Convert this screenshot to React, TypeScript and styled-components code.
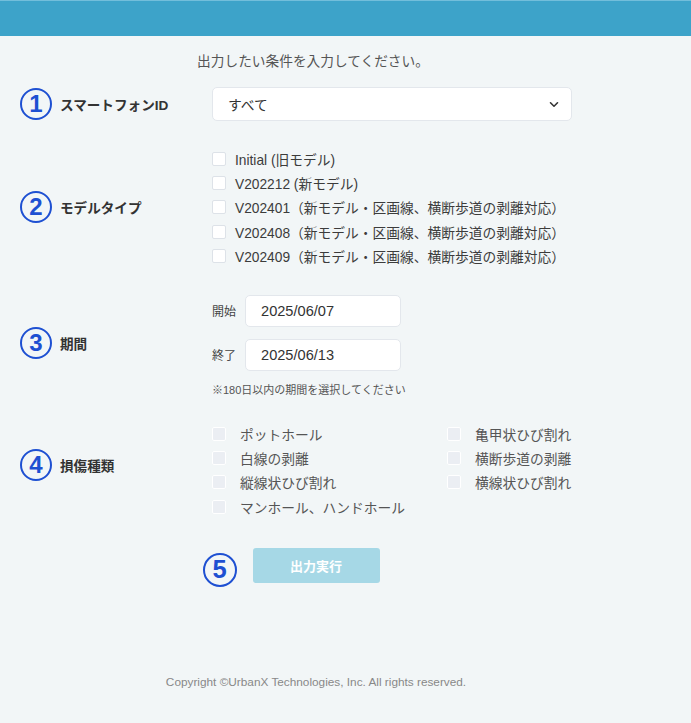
import React from "react";
import styled, { createGlobalStyle } from "styled-components";

const Global = createGlobalStyle`
  html, body { margin: 0; padding: 0; background: #f2f6f7; }
  body {
    font-family: "Liberation Sans", "Noto Sans CJK JP", sans-serif;
    color: #333;
  }
`;

const Page = styled.div`
  min-height: 723px;
  background: #f2f6f7;
  display: flex;
  flex-direction: column;
`;

const Header = styled.header`
  height: 36px;
  box-sizing: border-box;
  background: #3da3c9;
  border-top: 1px solid #72bedb;
`;

const Main = styled.main`
  width: 632px;
  padding-top: 16px;
  display: flex;
  flex-direction: column;
`;

const Intro = styled.p`
  margin: 0 0 15px;
  padding-right: 6px;
  text-align: center;
  font-size: 13.7px;
  line-height: 20px;
  color: #555;
`;

const Row = styled.section<{ $mt: number }>`
  display: grid;
  grid-template-columns: 192px 1fr;
  align-items: center;
  padding-left: 20px;
  margin-top: ${(p) => p.$mt}px;
`;

const LabelCell = styled.div<{ $shift?: number }>`
  display: flex;
  align-items: center;
  gap: 8px;
  margin-bottom: ${(p) => p.$shift ?? 0}px;
`;

const Badge = styled.span<{ $size?: number }>`
  width: ${(p) => p.$size ?? 32}px;
  height: ${(p) => p.$size ?? 32}px;
  box-sizing: border-box;
  border: 2px solid #1e50d2;
  border-radius: 50%;
  display: flex;
  align-items: center;
  justify-content: center;
  color: #1e50d2;
  font-family: "Liberation Sans", Arial, sans-serif;
  font-size: ${(p) => ((p.$size ?? 32) * 0.75).toFixed(1)}px;
  font-weight: 700;
  line-height: 1;
  flex: none;
`;

const LabelText = styled.span`
  font-size: 13.6px;
  font-weight: 700;
  color: #333;
`;

const SelectBox = styled.div`
  width: 360px;
  height: 34px;
  box-sizing: border-box;
  background: #fff;
  border: 1px solid #e3e7ec;
  border-radius: 5px;
  display: flex;
  align-items: center;
  justify-content: space-between;
  padding: 0 12px 0 15px;
  font-size: 13.75px;
  color: #333;
`;

const CheckList = styled.div`
  display: flex;
  flex-direction: column;
`;

const CheckItem = styled.label<{ $gap: number; $muted?: boolean }>`
  height: 24.2px;
  display: flex;
  align-items: center;
  gap: ${(p) => p.$gap}px;
  font-size: 13.75px;
  color: ${(p) => (p.$muted ? "#555" : "#3c3c3c")};
  white-space: nowrap;
`;

const Box = styled.span<{ $disabled?: boolean }>`
  width: 14px;
  height: 14px;
  box-sizing: border-box;
  border-radius: 2px;
  flex: none;
  background: ${(p) => (p.$disabled ? "#ebeef3" : "#fff")};
  border: 1px solid ${(p) => (p.$disabled ? "#fff" : "#dde2e8")};
`;

const DateGroup = styled.div`
  display: flex;
  flex-direction: column;
  gap: 12px;
`;

const DateRow = styled.div`
  display: flex;
  align-items: center;
  gap: 9px;
  font-size: 12px;
  color: #444;
`;

const DateInput = styled.div`
  width: 156px;
  height: 32px;
  box-sizing: border-box;
  background: #fff;
  border: 1px solid #e3e7ec;
  border-radius: 5px;
  display: flex;
  align-items: center;
  padding-left: 15px;
  font-size: 14.6px;
  color: #333;
`;

const Note = styled.p`
  margin: 12px 0 0;
  font-size: 11px;
  line-height: 14px;
  color: #555;
`;

const DamageGrid = styled.div`
  display: grid;
  grid-template-columns: 235px auto;
  grid-template-rows: repeat(4, 24.2px);
  grid-auto-flow: column;
`;

const ActionRow = styled.div`
  display: grid;
  grid-template-columns: 1fr auto 1fr;
  align-items: start;
  margin-top: 29px;
`;

const BadgeSlot = styled.div`
  display: flex;
  justify-content: flex-end;
  padding: 5px 16px 0 0;
`;

const RunButton = styled.button`
  width: 127px;
  height: 35px;
  border: none;
  border-radius: 3px;
  background: #a6d8e6;
  color: #fff;
  font-family: "Liberation Sans", "Noto Sans CJK JP", sans-serif;
  font-size: 13px;
  font-weight: 700;
  padding: 0;
`;

const Footer = styled.footer`
  width: 632px;
  margin-top: 87px;
  text-align: center;
  font-size: 11.8px;
  line-height: 16px;
  color: #888;
`;

const Chevron = () => (
  <svg width="10" height="7" viewBox="0 0 10 7" fill="none">
    <path d="M1.5 1.8l3.5 3.4 3.5-3.4" stroke="#333" strokeWidth="1.6" strokeLinecap="round" strokeLinejoin="round" />
  </svg>
);

const models = [
  "Initial (旧モデル)",
  "V202212 (新モデル)",
  "V202401（新モデル・区画線、横断歩道の剥離対応）",
  "V202408（新モデル・区画線、横断歩道の剥離対応）",
  "V202409（新モデル・区画線、横断歩道の剥離対応）",
];

const damages = [
  "ポットホール",
  "白線の剥離",
  "縦線状ひび割れ",
  "マンホール、ハンドホール",
  "亀甲状ひび割れ",
  "横断歩道の剥離",
  "横線状ひび割れ",
];

export default function App() {
  return (
    <Page>
      <Global />
      <Header />
      <Main>
        <Intro>出力したい条件を入力してください。</Intro>

        <Row $mt={0}>
          <LabelCell>
            <Badge>1</Badge>
            <LabelText>スマートフォンID</LabelText>
          </LabelCell>
          <SelectBox>
            <span>すべて</span>
            <Chevron />
          </SelectBox>
        </Row>

        <Row $mt={26}>
          <LabelCell>
            <Badge>2</Badge>
            <LabelText>モデルタイプ</LabelText>
          </LabelCell>
          <CheckList>
            {models.map((m) => (
              <CheckItem key={m} $gap={9}>
                <Box />
                {m}
              </CheckItem>
            ))}
          </CheckList>
        </Row>

        <Row $mt={27}>
          <LabelCell $shift={5}>
            <Badge>3</Badge>
            <LabelText>期間</LabelText>
          </LabelCell>
          <div>
            <DateGroup>
              <DateRow>
                開始<DateInput>2025/06/07</DateInput>
              </DateRow>
              <DateRow>
                終了<DateInput>2025/06/13</DateInput>
              </DateRow>
            </DateGroup>
            <Note>※180日以内の期間を選択してください</Note>
          </div>
        </Row>

        <Row $mt={25}>
          <LabelCell $shift={10}>
            <Badge>4</Badge>
            <LabelText>損傷種類</LabelText>
          </LabelCell>
          <DamageGrid>
            {damages.map((d) => (
              <CheckItem key={d} $gap={14} $muted>
                <Box $disabled />
                {d}
              </CheckItem>
            ))}
          </DamageGrid>
        </Row>

        <ActionRow>
          <BadgeSlot>
            <Badge $size={34}>5</Badge>
          </BadgeSlot>
          <RunButton disabled>出力実行</RunButton>
          <div />
        </ActionRow>
      </Main>
      <Footer>Copyright ©UrbanX Technologies, Inc. All rights reserved.</Footer>
    </Page>
  );
}
